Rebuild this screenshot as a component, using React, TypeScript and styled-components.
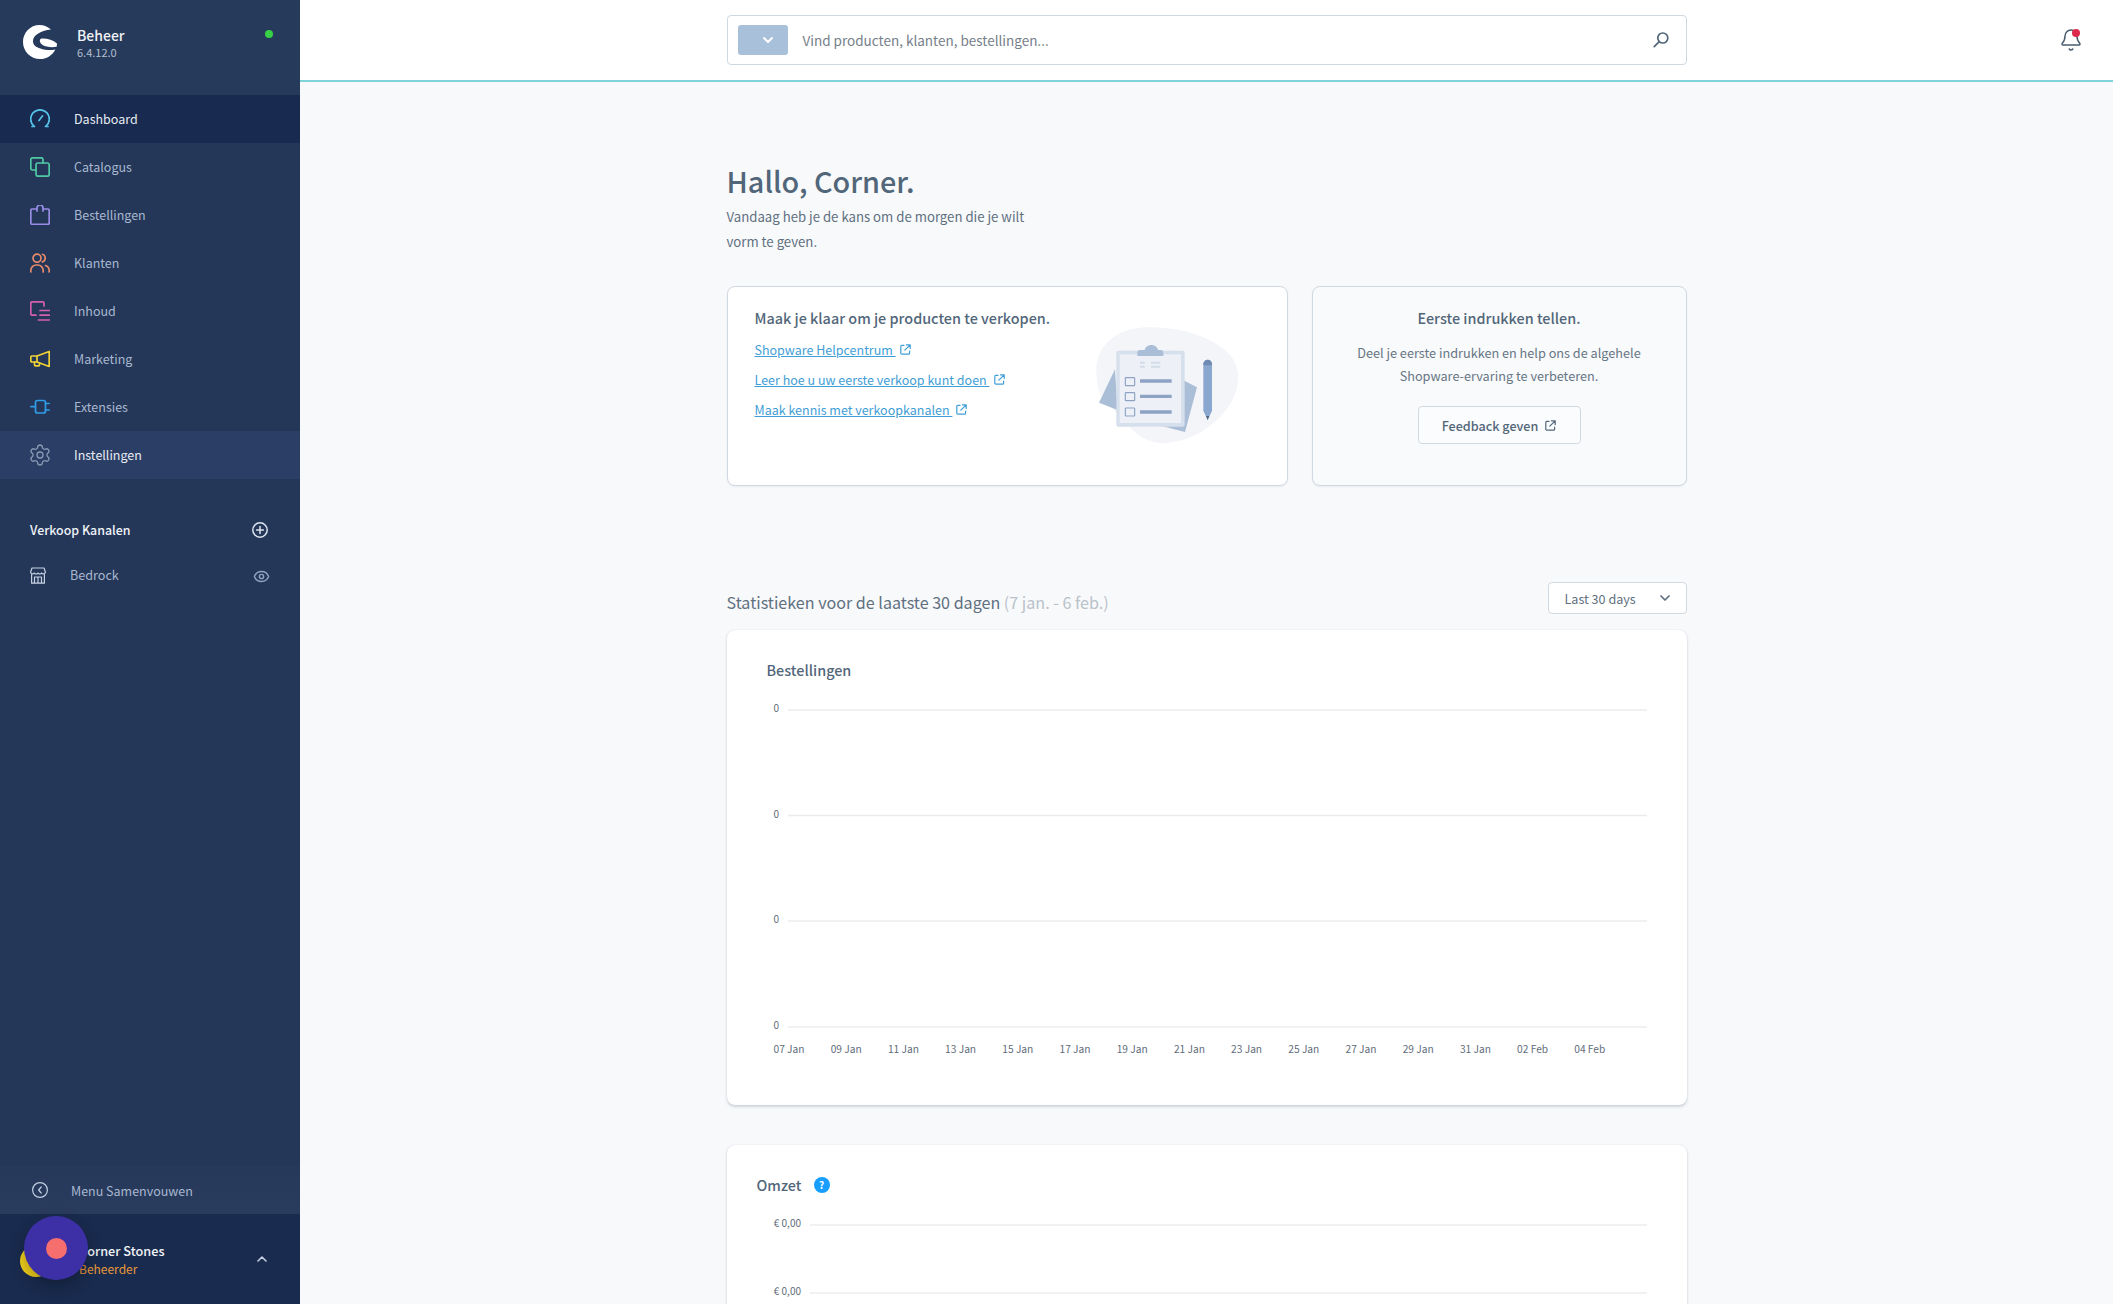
import React from "react";
import styled, { createGlobalStyle } from "styled-components";
import { Settings, Eye, Bell, ChevronDown, ChevronUp } from "lucide-react";

const GlobalStyle = createGlobalStyle`
  html, body { margin: 0; padding: 0; height: 100%; }
  body { font-family: "Noto Sans CJK SC", "Source Sans Pro", "Noto Sans", sans-serif; background: #f8f9fb; color: #52667a; }
  * { box-sizing: border-box; }
`;

const Shell = styled.div`
  display: flex;
  height: 1304px;
  overflow: hidden;
`;

const Sidebar = styled.aside`
  width: 300px;
  flex: none;
  background: #243758;
  display: flex;
  flex-direction: column;
  position: relative;
`;

const Brand = styled.div`
  height: 95px;
  flex: none;
  padding: 25px 0 0 23px;
  display: flex;
  align-items: flex-start;
  background: #263a5c;
`;

const BrandText = styled.div`
  margin-left: 20px;
  display: flex;
  flex-direction: column;
`;

const BrandName = styled.span`
  font-size: 14px;
  line-height: 20px;
  font-weight: 500;
  color: #f0f2f5;
`;

const BrandVersion = styled.span`
  font-size: 11px;
  line-height: 14px;
  color: #b5c0d0;
`;

const StatusDot = styled.span`
  position: absolute;
  left: 265px;
  top: 30px;
  width: 8px;
  height: 8px;
  border-radius: 50%;
  background: #37d046;
`;

const Nav = styled.nav`
  display: flex;
  flex-direction: column;
`;

const NavRow = styled.div<{ $tone?: "active" | "hover" }>`
  height: 48px;
  display: flex;
  align-items: center;
  padding-left: 30px;
  gap: 24px;
  font-size: 12.5px;
  color: ${(p) => (p.$tone ? "#e6ebf2" : "#a8b7d0")};
  background: ${(p) => (p.$tone === "active" ? "#182a4f" : p.$tone === "hover" ? "#2b3e66" : "transparent")};
  svg { flex: none; display: block; }
`;

const NavLabel = styled.span`
  margin-bottom: 2px;
`;

const GearIcon = styled(Settings)`
  margin: -2px;
`;

const SectionHead = styled.div`
  margin-top: 31px;
  height: 40px;
  display: flex;
  align-items: center;
  justify-content: space-between;
  padding: 0 32px 0 30px;
  font-size: 12.4px;
  font-weight: 500;
  color: #f0f3f7;
`;

const ChannelRow = styled.div`
  margin-top: 1px;
  height: 48px;
  display: flex;
  align-items: center;
  padding: 0 30px 0 30px;
  gap: 24px;
  font-size: 12.6px;
  color: #a8b7d0;
  span { flex: 1; margin-bottom: 2px; }
`;

const EyeIcon = styled(Eye)`
  margin-top: 2px;
`;

const Spacer = styled.div`
  flex: 1;
`;

const CollapseRow = styled.div`
  height: 48px;
  flex: none;
  display: flex;
  align-items: center;
  padding-left: 32px;
  gap: 23px;
  font-size: 12.5px;
  color: #a8b7d0;
  background: linear-gradient(#26395a, #293c5e);
`;

const UserBar = styled.div`
  height: 90px;
  flex: none;
  background: #192b4e;
  display: flex;
  align-items: center;
  padding: 0 30px 0 20px;
  color: #c4d0e2;
`;

const Avatar = styled.span`
  width: 32px;
  height: 32px;
  border-radius: 50%;
  background: #f0cf1d;
  flex: none;
  margin-top: 4px;
`;

const UserText = styled.div`
  margin-left: 27px;
  flex: 1;
  display: flex;
  flex-direction: column;
  margin-top: 1px;
`;

const UserName = styled.span`
  font-size: 12.7px;
  line-height: 18px;
  font-weight: 500;
  color: #f0f3f7;
`;

const UserRole = styled.span`
  font-size: 12px;
  line-height: 17px;
  color: #e8973c;
`;

const Launcher = styled.div`
  position: absolute;
  left: 24px;
  top: 1216px;
  width: 64px;
  height: 64px;
  border-radius: 50%;
  background: #3d2fa6;
  box-shadow: 0 6px 16px rgba(0, 0, 0, 0.28);
  display: flex;
  align-items: center;
  justify-content: center;
`;

const LauncherDot = styled.span`
  width: 21px;
  height: 21px;
  border-radius: 50%;
  background: #f76e6e;
`;

const Main = styled.main`
  flex: 1;
  min-width: 0;
  display: flex;
  flex-direction: column;
  background: #f8f9fb;
`;

const TopBar = styled.header`
  height: 82px;
  flex: none;
  background: #fff;
  border-bottom: 2px solid #7fd3da;
  display: grid;
  grid-template-columns: 1fr 960px 1fr;
  align-items: center;
`;

const SearchBox = styled.div`
  grid-column: 2;
  height: 50px;
  border: 1px solid #d1d9e0;
  border-radius: 4px;
  display: flex;
  align-items: center;
  padding: 0 16px 0 10px;
  background: #fff;
`;

const TypeButton = styled.div`
  width: 50px;
  height: 30px;
  border-radius: 3px;
  background: #a9c0da;
  display: flex;
  align-items: center;
  justify-content: flex-end;
  padding-right: 12px;
  color: #fff;
  flex: none;
`;

const Placeholder = styled.span`
  flex: 1;
  margin-left: 15px;
  font-size: 13.5px;
  color: #76808a;
`;

const BellWrap = styled.div`
  justify-self: end;
  margin-right: 30px;
  position: relative;
  width: 24px;
  height: 24px;
  color: #4a5d70;
  svg { display: block; }
`;

const BellDot = styled.span`
  position: absolute;
  right: 3px;
  top: 1px;
  width: 8px;
  height: 8px;
  border-radius: 50%;
  background: #de294c;
`;

const Column = styled.div`
  width: 960px;
  margin: 0 auto;
  padding-top: 81px;
  flex: none;
`;

const Greeting = styled.h1`
  margin: 0;
  font-size: 28.8px;
  line-height: 36px;
  font-weight: 500;
  color: #52667a;
`;

const Tagline = styled.p`
  margin: 5px 0 0;
  width: 320px;
  font-size: 13.2px;
  line-height: 25px;
  color: #5f7080;
`;

const CardRow = styled.div`
  display: flex;
  gap: 24px;
  margin-top: 32px;
`;

const PanelBase = styled.section`
  height: 200px;
  border: 1px solid #d1d9e0;
  border-radius: 8px;
  box-shadow: 0 1px 2px rgba(120, 138, 155, 0.12);
`;

const GuidePanel = styled(PanelBase)`
  width: 561px;
  flex: none;
  background: #fff;
  padding: 20px 28px 0 27px;
  display: flex;
  justify-content: space-between;
  align-items: flex-start;
`;

const GuideText = styled.div`
  display: flex;
  flex-direction: column;
  align-items: flex-start;
`;

const PanelTitle = styled.h2`
  margin: 0;
  font-size: 14.4px;
  line-height: 22px;
  font-weight: 500;
  color: #52667a;
  white-space: nowrap;
`;

const GuideLinks = styled.div`
  margin-top: 10px;
  display: flex;
  flex-direction: column;
  gap: 10px;
`;

const GuideLink = styled.a`
  display: flex;
  align-items: center;
  height: 20px;
  font-size: 12.5px;
  color: #3f9ed6;
  gap: 4px;
  span { text-decoration: underline; white-space: pre; }
`;

const IllustrationSvg = styled.svg`
  flex: none;
  margin-top: 3px;
`;

const FeedbackPanel = styled(PanelBase)`
  flex: 1;
  background: #f9fafb;
  padding-top: 20px;
  display: flex;
  flex-direction: column;
  align-items: center;
  text-align: center;
`;

const FeedbackCopy = styled.p`
  margin: 12px 0 0;
  width: 320px;
  font-size: 12.7px;
  line-height: 23px;
  color: #667685;
`;

const FeedbackButton = styled.div`
  margin-top: 19px;
  width: 163px;
  height: 38px;
  border: 1px solid #d1d9e0;
  border-radius: 4px;
  display: flex;
  align-items: center;
  justify-content: center;
  gap: 7px;
  font-size: 12.6px;
  font-weight: 500;
  color: #52667a;
  background: #fbfcfd;
`;

const StatsHead = styled.div`
  margin-top: 96px;
  height: 32px;
  display: flex;
  justify-content: space-between;
  align-items: flex-start;
`;

const StatsTitle = styled.h2`
  margin: 8px 0 0;
  font-size: 16.1px;
  line-height: 24px;
  font-weight: 400;
  color: #5f7080;
  em { font-style: normal; color: #b9c2ca; }
`;

const RangeSelect = styled.div`
  width: 139px;
  height: 32px;
  border: 1px solid #d1d9e0;
  border-radius: 4px;
  background: #fff;
  display: flex;
  align-items: center;
  justify-content: space-between;
  padding: 0 13px 0 16px;
  font-size: 12.6px;
  color: #5f7080;
`;

const ChartCard = styled.section<{ $height: number; $gap: number }>`
  height: ${(p) => p.$height}px;
  margin-top: ${(p) => p.$gap}px;
  background: #fff;
  border-radius: 8px;
  box-shadow: 0 0 1px rgba(120, 138, 155, 0.35), 0 2px 3px rgba(82, 102, 122, 0.25);
`;

const ChartTitle = styled.h3<{ $left: number }>`
  margin: 0;
  padding: 28px 0 0 ${(p) => p.$left}px;
  height: 52px;
  display: flex;
  align-items: center;
  gap: 12px;
  font-size: 14.4px;
  line-height: 24px;
  font-weight: 500;
  color: #52667a;
`;

const HelpBadge = styled.span`
  width: 16px;
  height: 16px;
  border-radius: 50%;
  background: #189eff;
  color: #fff;
  font-size: 10px;
  line-height: 16px;
  font-weight: 700;
  text-align: center;
`;

const ChartSvg = styled.svg`
  display: block;
  text {
    font-family: "Noto Sans CJK SC", "Noto Sans", sans-serif;
    fill: #5f6d7a;
  }
  line {
    stroke: #ececef;
    stroke-width: 1.5;
  }
`;

const iconProps = { width: 20, height: 20, viewBox: "0 0 20 20", fill: "none", strokeWidth: 1.7, strokeLinecap: "round" as const, strokeLinejoin: "round" as const };

const GaugeIcon = () => (
  <svg {...iconProps} stroke="#55c3e9">
    <path d="M4 17.2A9.3 9.3 0 1 1 16 17.2" />
    <path d="M9 11.5 12.6 6.8M2 17.5h2.5M18 17.5h-2.5" />
  </svg>
);
const CatalogIcon = () => (
  <svg {...iconProps} stroke="#4fc9a4">
    <path d="M13 6V2.5A1.8 1.8 0 0 0 11.2.8H2.5A1.8 1.8 0 0 0 .8 2.5v8.7A1.8 1.8 0 0 0 2.5 13H6" />
    <rect x="6" y="6" width="13.2" height="13.2" rx="2" />
  </svg>
);
const BagIcon = () => (
  <svg {...iconProps} stroke="#9a8ce6">
    <path d="M6 4H2A1.2 1.2 0 0 0 .8 5.2v13A1.2 1.2 0 0 0 2 19.3h16a1.2 1.2 0 0 0 1.2-1.2v-13A1.2 1.2 0 0 0 18 4h-4" />
    <path d="M7 6V3a3 3 0 0 1 6 0v3" />
  </svg>
);
const PeopleIcon = () => (
  <svg {...iconProps} stroke="#e58a6b">
    <circle cx="7" cy="5.2" r="4" />
    <path d="M.8 19v-1.5a5.5 5.5 0 0 1 5.5-5.5h1.4a5.5 5.5 0 0 1 5.5 5.5V19" />
    <path d="M12.5 1.3a4 4 0 0 1 0 7.6M15.5 12.5a5.5 5.5 0 0 1 3.7 5V19" />
  </svg>
);
const ContentIcon = () => (
  <svg {...iconProps} stroke="#d55fae">
    <path d="M14 5V2.2A1.4 1.4 0 0 0 12.6.8H2.2A1.4 1.4 0 0 0 .8 2.2v10.6A1.4 1.4 0 0 0 2.2 14.2H6" />
    <path d="M10 9.5h9.5M10 14.2h9.5M8.5 19h11" />
  </svg>
);
const MegaphoneIcon = () => (
  <svg {...iconProps} stroke="#f0d234">
    <path d="M19.2 2.5v15L7 13H1.8a1 1 0 0 1-1-1V8a1 1 0 0 1 1-1H7z" />
    <path d="M7 7v6M4.5 13v2.8a1 1 0 0 0 1 1h3a1 1 0 0 0 1-1V14" />
  </svg>
);
const PlugIcon = () => (
  <svg {...iconProps} stroke="#2f9ce6">
    <rect x="5.5" y="3.5" width="10" height="12.5" rx="2" />
    <path d="M.8 9.7h4.7M15.5 6.5h3.7M15.5 13h3.7" />
  </svg>
);
const StoreIcon = () => (
  <svg width="16" height="17" viewBox="0 0 16 17" fill="none" stroke="#c6d2e4" strokeWidth="1.2" strokeLinejoin="round">
    <path d="M2 1h12l1.4 4a2 2 0 0 1-3.7 1 2.1 2.1 0 0 1-3.7 0 2.1 2.1 0 0 1-3.7 0A2 2 0 0 1 .6 5z" />
    <path d="M1.6 7.2v9h12.8V7.2" />
    <path d="M4.5 16v-6h7v6M8 10v6" />
  </svg>
);
const PlusCircle = () => (
  <svg width="16" height="16" viewBox="0 0 16 16" fill="none" stroke="#dde5f0" strokeWidth="1.5" strokeLinecap="round">
    <circle cx="8" cy="8" r="7.2" />
    <path d="M8 4.6v6.8M4.6 8h6.8" />
  </svg>
);
const CollapseIcon = () => (
  <svg width="16" height="16" viewBox="0 0 16 16" fill="none" stroke="#c2cfe3" strokeWidth="1.2" strokeLinecap="round" strokeLinejoin="round">
    <circle cx="8" cy="8" r="7.4" />
    <path d="M9.2 5 6.6 8l2.6 3" />
  </svg>
);
const SearchGlass = () => (
  <svg width="18" height="18" viewBox="0 0 18 18" fill="none" stroke="#52667a" strokeWidth="1.7" strokeLinecap="round">
    <circle cx="10.8" cy="7" r="5" />
    <path d="M7.2 10.6 2.2 15.6" />
  </svg>
);
const ExternalIcon = ({ color = "#3f9ed6" }: { color?: string }) => (
  <svg width="11" height="11" viewBox="0 0 11 11" fill="none" stroke={color} strokeWidth="1.2" strokeLinecap="round" strokeLinejoin="round">
    <path d="M4 1.4H1.8A1 1 0 0 0 .8 2.4v6.8a1 1 0 0 0 1 1h6.8a1 1 0 0 0 1-1V7" />
    <path d="M6.4.8h3.8v3.8M10.2.8 4.8 6.2" />
  </svg>
);
const Logo = () => (
  <svg width="34" height="34" viewBox="0 0 34 34" fill="#fff">
    <path d="M28 4.6C25 1.8 21 0 16.6 0 7.2 0 0 7.6 0 17s7.4 17 17 17c6.2 0 12-3.2 15.4-9.6-5 1.2-10 .8-15-1C13 22.2 10 20 10 16.2 10 10.6 17 5.8 28 4.6Z" />
    <path d="M18.4 13.6c5-.4 11.6 1.2 15.6 5 0 1-.1 2.2-.4 3.2-5.4.8-10.6.2-14-1.8-3.2-1.9-3.6-5.6-1.2-6.4Z" />
  </svg>
);

const Illustration = () => (
  <IllustrationSvg width="200" height="150" viewBox="0 0 600 450" fill="none">
    <path d="M112 185C110 110 170 55 260 52c90-3 210 25 258 90 35 48 20 115-22 165-42 50-115 95-190 92-72-3-105-65-150-105-35-32-42-60-44-109Z" fill="#f3f5f8" />
    <path d="M168 178 120 278l56 22z" fill="#abbed8" />
    <path d="M376 212l38 20-36 134-70-18z" fill="#abbed8" />
    <rect x="172" y="122" width="205" height="228" rx="6" fill="#d6dfec" />
    <rect x="182" y="133" width="184" height="206" fill="#edf1f7" />
    <path d="M235 138v-10a8 8 0 0 1 8-8h14c4-20 36-20 40 0h8a8 8 0 0 1 8 8v10z" fill="#abbed8" />
    <path d="M243 158h14M243 170h14M276 158h18M276 170h18M290 158h14M290 170h14" stroke="#d2dbe8" strokeWidth="6" />
    <g stroke="#8ea3c4" strokeWidth="3.5">
      <rect x="199" y="203" width="28" height="24" rx="2" />
      <rect x="199" y="248" width="28" height="24" rx="2" />
      <rect x="199" y="294" width="28" height="24" rx="2" />
    </g>
    <path d="M243 213h95M243 259h95M243 306h95" stroke="#8ea3c4" strokeWidth="10" />
    <path d="M433 162a13 13 0 0 1 26 0v140l-13 28-13-28z" fill="#8aa7d0" />
    <path d="M433 162a13 13 0 0 1 26 0v4h-26z" fill="#6f8ab3" />
    <path d="M441 318h10l-5 12z" fill="#52667a" />
  </IllustrationSvg>
);

const Page = styled.div`
  overflow: hidden;
  flex: 1;
  min-height: 0;
`;

const navItems: { label: string; icon: React.ReactNode; tone?: "active" | "hover" }[] = [
  { label: "Dashboard", icon: <GaugeIcon />, tone: "active" },
  { label: "Catalogus", icon: <CatalogIcon /> },
  { label: "Bestellingen", icon: <BagIcon /> },
  { label: "Klanten", icon: <PeopleIcon /> },
  { label: "Inhoud", icon: <ContentIcon /> },
  { label: "Marketing", icon: <MegaphoneIcon /> },
  { label: "Extensies", icon: <PlugIcon /> },
  { label: "Instellingen", icon: <GearIcon size={24} strokeWidth={1.3} color="#8b9ab3" />, tone: "hover" },
];

const days = ["07 Jan", "09 Jan", "11 Jan", "13 Jan", "15 Jan", "17 Jan", "19 Jan", "21 Jan", "23 Jan", "25 Jan", "27 Jan", "29 Jan", "31 Jan", "02 Feb", "04 Feb"];
const orderLines = [28, 133.5, 239, 345];
const revenueLines = [28, 96];

export default function App() {
  return (
    <>
      <GlobalStyle />
      <Shell>
        <Sidebar>
          <Brand>
            <Logo />
            <BrandText>
              <BrandName>Beheer</BrandName>
              <BrandVersion>6.4.12.0</BrandVersion>
            </BrandText>
            <StatusDot />
          </Brand>
          <Nav>
            {navItems.map((item) => (
              <NavRow key={item.label} $tone={item.tone}>
                {item.icon}
                <NavLabel>{item.label}</NavLabel>
              </NavRow>
            ))}
          </Nav>
          <SectionHead>
            Verkoop Kanalen
            <PlusCircle />
          </SectionHead>
          <ChannelRow>
            <StoreIcon />
            <span>Bedrock</span>
            <EyeIcon size={17} strokeWidth={2} color="#8fa3c2" />
          </ChannelRow>
          <Spacer />
          <CollapseRow>
            <CollapseIcon />
            Menu Samenvouwen
          </CollapseRow>
          <UserBar>
            <Avatar />
            <UserText>
              <UserName>Corner Stones</UserName>
              <UserRole>Beheerder</UserRole>
            </UserText>
            <ChevronUp size={16} strokeWidth={2.4} />
          </UserBar>
          <Launcher>
            <LauncherDot />
          </Launcher>
        </Sidebar>
        <Main>
          <TopBar>
            <SearchBox>
              <TypeButton>
                <ChevronDown size={16} strokeWidth={3} />
              </TypeButton>
              <Placeholder>Vind producten, klanten, bestellingen...</Placeholder>
              <SearchGlass />
            </SearchBox>
            <BellWrap>
              <Bell size={24} strokeWidth={1.5} />
              <BellDot />
            </BellWrap>
          </TopBar>
          <Page>
            <Column>
              <Greeting>Hallo, Corner.</Greeting>
              <Tagline>Vandaag heb je de kans om de morgen die je wilt vorm te geven.</Tagline>
              <CardRow>
                <GuidePanel>
                  <GuideText>
                    <PanelTitle>Maak je klaar om je producten te verkopen.</PanelTitle>
                    <GuideLinks>
                      <GuideLink><span>Shopware Helpcentrum </span><ExternalIcon /></GuideLink>
                      <GuideLink><span>Leer hoe u uw eerste verkoop kunt doen </span><ExternalIcon /></GuideLink>
                      <GuideLink><span>Maak kennis met verkoopkanalen </span><ExternalIcon /></GuideLink>
                    </GuideLinks>
                  </GuideText>
                  <Illustration />
                </GuidePanel>
                <FeedbackPanel>
                  <PanelTitle>Eerste indrukken tellen.</PanelTitle>
                  <FeedbackCopy>Deel je eerste indrukken en help ons de algehele Shopware-ervaring te verbeteren.</FeedbackCopy>
                  <FeedbackButton>
                    Feedback geven
                    <ExternalIcon color="#52667a" />
                  </FeedbackButton>
                </FeedbackPanel>
              </CardRow>
              <StatsHead>
                <StatsTitle>
                  Statistieken voor de laatste 30 dagen <em>(7 jan. - 6 feb.)</em>
                </StatsTitle>
                <RangeSelect>
                  Last 30 days
                  <ChevronDown size={16} strokeWidth={2.6} />
                </RangeSelect>
              </StatsHead>
              <ChartCard $height={475} $gap={16}>
                <ChartTitle $left={40}>Bestellingen</ChartTitle>
                <ChartSvg width="960" height="395" viewBox="0 0 960 395">
                  {orderLines.map((y) => (
                    <g key={y}>
                      <text x="52" y={y + 2} fontSize="10" textAnchor="end">0</text>
                      <line x1="61" x2="920" y1={y} y2={y} />
                    </g>
                  ))}
                  {days.map((d, i) => (
                    <text key={d} x={62 + i * 57.2} y="371" fontSize="10.2" textAnchor="middle">{d}</text>
                  ))}
                </ChartSvg>
              </ChartCard>
              <ChartCard $height={475} $gap={40}>
                <ChartTitle $left={30}>
                  Omzet
                  <HelpBadge>?</HelpBadge>
                </ChartTitle>
                <ChartSvg width="960" height="110" viewBox="0 0 960 110">
                  {revenueLines.map((y) => (
                    <g key={y}>
                      <text x="74" y={y + 2} fontSize="10" textAnchor="end">€ 0,00</text>
                      <line x1="83" x2="920" y1={y} y2={y} />
                    </g>
                  ))}
                </ChartSvg>
              </ChartCard>
            </Column>
          </Page>
        </Main>
      </Shell>
    </>
  );
}
